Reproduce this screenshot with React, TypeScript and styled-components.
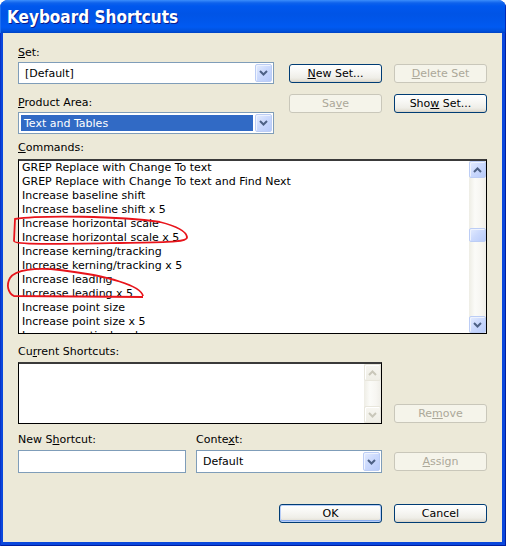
import React from "react";
import styled, { createGlobalStyle } from "styled-components";

const GlobalStyle = createGlobalStyle`
  html, body { margin: 0; padding: 0; background: #ffffff; }
  body {
    font-family: "DejaVu Sans", Verdana, sans-serif;
    font-size: 11px;
    color: #000;
  }
  * { box-sizing: border-box; }
`;

const Window = styled.div`
  width: 506px;
  height: 546px;
  display: flex;
  flex-direction: column;
  border-radius: 8px 8px 0 0;
  overflow: hidden;
  background: #0842d8;
`;

const TitleBar = styled.div`
  height: 33px;
  flex: none;
  display: flex;
  align-items: center;
  padding: 0 0 0 7px;
  background: linear-gradient(
    180deg,
    #3d8ffb 0px,
    #2b7ef6 1px,
    #0e62ec 3px,
    #0058ee 6px,
    #0054e6 14px,
    #0057ec 22px,
    #005af2 27px,
    #0050dc 31px,
    #0043c4 33px
  );
  box-shadow: inset 1px 0 0 #1f6ff0, inset -1px 0 0 #0029b8;
`;

const Title = styled.div`
  font-family: "DejaVu Sans Condensed", "DejaVu Sans", sans-serif;
  font-weight: bold;
  font-size: 17px;
  color: #ffffff;
  text-shadow: 1px 1px 0 #0a1a8a;
  padding-top: 1px;
`;

const Frame = styled.div`
  flex: 1;
  display: flex;
  padding: 0 4px 4px 3px;
  background: #0a47dc;
  box-shadow: inset 1px 0 0 #0a34c8, inset -1px 0 0 #001ea0,
    inset 0 -1px 0 #001ea0;
`;

const Body = styled.div`
  flex: 1;
  background: #ece9d8;
  padding: 13px 15px 0 15px;
  display: flex;
  flex-direction: column;
`;

const Row = styled.div<{ $mt?: number; $align?: string; $justify?: string; $gap?: number }>`
  display: flex;
  flex: none;
  align-items: ${(p) => p.$align ?? "flex-start"};
  justify-content: ${(p) => p.$justify ?? "flex-start"};
  gap: ${(p) => p.$gap ?? 0}px;
  margin-top: ${(p) => p.$mt ?? 0}px;
`;

const Field = styled.div<{ $w?: number; $mt?: number; $ml?: number }>`
  display: flex;
  flex-direction: column;
  flex: none;
  width: ${(p) => (p.$w ? `${p.$w}px` : "100%")};
  margin-top: ${(p) => p.$mt ?? 0}px;
  margin-left: ${(p) => p.$ml ?? 0}px;
`;

const Label = styled.div<{ $mb?: number; $mt?: number }>`
  height: 14px;
  line-height: 14px;
  white-space: nowrap;
  margin-top: ${(p) => p.$mt ?? 0}px;
  margin-bottom: ${(p) => p.$mb ?? 3}px;
`;

const Mn = styled.span`
  text-decoration: underline;
  text-underline-offset: 1px;
`;

const ButtonGrid = styled.div`
  display: grid;
  grid-template-columns: 93px 93px;
  grid-auto-rows: 19px;
  column-gap: 12px;
  row-gap: 11px;
  margin-left: 15px;
  padding-top: 18px;
`;

const XPButton = styled.div<{ $w?: number; $disabled?: boolean; $default?: boolean; $mb?: number; $ml?: number }>`
  width: ${(p) => p.$w ?? 93}px;
  height: 19px;
  flex: none;
  display: flex;
  align-items: center;
  justify-content: center;
  border-radius: 3px;
  margin-bottom: ${(p) => p.$mb ?? 0}px;
  margin-left: ${(p) => p.$ml ?? 0}px;
  white-space: nowrap;
  border: 1px solid ${(p) => (p.$disabled ? "#c9c7ba" : "#003c74")};
  color: ${(p) => (p.$disabled ? "#aca899" : "#000")};
  background: ${(p) =>
    p.$disabled
      ? "#f5f4ea"
      : "linear-gradient(180deg, #ffffff 0%, #f7f7f4 40%, #efeee8 75%, #e3e0d6 92%, #d6d0c5 100%)"};
  box-shadow: ${(p) =>
    p.$default ? "inset 0 0 0 1px #b7cdf7, inset 0 -1px 0 1px #89adef" : "none"};
`;

const TextBox = styled.div<{ $w?: number; $h?: number }>`
  width: ${(p) => (p.$w ? `${p.$w}px` : "100%")};
  height: ${(p) => p.$h ?? 22}px;
  border: 1px solid #7f9db9;
  background: #ffffff;
  display: flex;
  align-items: stretch;
  padding: 1px;
`;

const ComboText = styled.div<{ $selected?: boolean }>`
  flex: 1;
  display: flex;
  align-items: center;
  padding-left: ${(p) => (p.$selected ? 3 : 4)}px;
  margin: 1px 2px 1px 1px;
  background: ${(p) => (p.$selected ? "#316ac5" : "transparent")};
  color: ${(p) => (p.$selected ? "#ffffff" : "#000")};
  white-space: nowrap;
`;

const ArrowButton = styled.div<{ $disabled?: boolean }>`
  width: 17px;
  flex: none;
  display: flex;
  align-items: center;
  justify-content: center;
  border: 1px solid ${(p) => (p.$disabled ? "#e8e6dc" : "#bccdf5")};
  border-radius: 2px;
  background: ${(p) =>
    p.$disabled
      ? "linear-gradient(180deg, #f7f6f1 0%, #efeee6 100%)"
      : "linear-gradient(135deg, #e4ecfe 0%, #ccdafd 45%, #b8cbfa 100%)"};
  box-shadow: inset 1px 1px 0 ${(p) => (p.$disabled ? "#ffffff" : "#eef3fe")};
`;

const Chevron = ({ up, color }: { up?: boolean; color: string }) => (
  <svg width="9" height="6" viewBox="0 0 9 6" style={{ display: "block" }}>
    <path
      d={up ? "M1 5 L4.5 1.5 L8 5" : "M1 1 L4.5 4.5 L8 1"}
      fill="none"
      stroke={color}
      strokeWidth="2"
    />
  </svg>
);

const ListWrap = styled.div`
  position: relative;
`;

const ListBox = styled.div<{ $h: number; $w?: number }>`
  width: ${(p) => (p.$w ? `${p.$w}px` : "100%")};
  height: ${(p) => p.$h}px;
  flex: none;
  border: 1px solid #000;
  border-top-width: 2px;
  border-top-color: #3a3a3a;
  background: #ffffff;
  display: flex;
  overflow: hidden;
`;

const ListItems = styled.div`
  flex: 1;
  overflow: hidden;
  padding: 0 0 0 3px;
`;

const Item = styled.div`
  height: 14px;
  line-height: 14px;
  white-space: nowrap;
`;

const ScrollBar = styled.div`
  width: 17px;
  flex: none;
  display: flex;
  flex-direction: column;
  background: linear-gradient(90deg, #eeede5 0%, #fbfbf8 35%, #f7f6f2 70%, #efeee8 100%);
`;

const ScrollButton = styled(ArrowButton)`
  height: 17px;
  width: 17px;
`;

const Track = styled.div`
  flex: 1;
  display: flex;
  flex-direction: column;
`;

const Thumb = styled(ArrowButton)`
  height: 14px;
  width: 17px;
`;

const Annotation = styled.svg`
  position: absolute;
  left: 0;
  top: 0;
  overflow: visible;
  pointer-events: none;
`;

const commands = [
  "GREP Replace with Change To text",
  "GREP Replace with Change To text and Find Next",
  "Increase baseline shift",
  "Increase baseline shift x 5",
  "Increase horizontal scale",
  "Increase horizontal scale x 5",
  "Increase kerning/tracking",
  "Increase kerning/tracking x 5",
  "Increase leading",
  "Increase leading x 5",
  "Increase point size",
  "Increase point size x 5",
  "Increase vertical scale",
];

export default function App() {
  return (
    <>
      <GlobalStyle />
      <Window>
        <TitleBar>
          <Title>Keyboard Shortcuts</Title>
        </TitleBar>
        <Frame>
          <Body>
            <Row>
              <Field $w={256}>
                <Label $mb={2}>
                  <Mn>S</Mn>et:
                </Label>
                <TextBox>
                  <ComboText>[Default]</ComboText>
                  <ArrowButton>
                    <Chevron color="#4d6185" />
                  </ArrowButton>
                </TextBox>
                <Label $mb={2} $mt={12}>
                  <Mn>P</Mn>roduct Area:
                </Label>
                <TextBox>
                  <ComboText $selected>Text and Tables</ComboText>
                  <ArrowButton>
                    <Chevron color="#4d6185" />
                  </ArrowButton>
                </TextBox>
              </Field>
              <ButtonGrid>
                <XPButton>
                  <span>
                    <Mn>N</Mn>ew Set...
                  </span>
                </XPButton>
                <XPButton $disabled>
                  <span>
                    <Mn>D</Mn>elete Set
                  </span>
                </XPButton>
                <XPButton $disabled>
                  <span>
                    Sa<Mn>v</Mn>e
                  </span>
                </XPButton>
                <XPButton>
                  <span>
                    Sho<Mn>w</Mn> Set...
                  </span>
                </XPButton>
              </ButtonGrid>
            </Row>

            <Field $mt={7}>
              <Label $mb={4}>
                <Mn>C</Mn>ommands:
              </Label>
              <ListWrap>
                <ListBox $h={175}>
                  <ListItems>
                    {commands.map((c) => (
                      <Item key={c}>{c}</Item>
                    ))}
                  </ListItems>
                  <ScrollBar>
                    <ScrollButton>
                      <Chevron up color="#4d6185" />
                    </ScrollButton>
                    <Track>
                      <Thumb style={{ marginTop: 50 }} />
                    </Track>
                    <ScrollButton>
                      <Chevron color="#4d6185" />
                    </ScrollButton>
                  </ScrollBar>
                </ListBox>
                <Annotation width="469" height="175">
                  <path
                    d="M142 63 C102 57, 22 56, -3 60 L-4 82 C-4 86, 42 85, 102 84 C142 83, 170 84, 169 78 C168 72, 158 67, 142 63"
                    fill="none"
                    stroke="#e8141b"
                    strokeWidth="1.8"
                  />
                  <path
                    d="M125 137 C123 127, 92 117, 42 111 C17 108, -3 111, -8 119 C-12 126, -10 134, -4 137 L125 138"
                    fill="none"
                    stroke="#e8141b"
                    strokeWidth="1.8"
                  />
                </Annotation>
              </ListWrap>
            </Field>

            <Field $mt={11}>
              <Label>
                Cu<Mn>r</Mn>rent Shortcuts:
              </Label>
              <Row $align="flex-end" $gap={12}>
                <ListBox $h={62} $w={364}>
                  <ListItems />
                  <ScrollBar>
                    <ScrollButton $disabled>
                      <Chevron up color="#c9c7ba" />
                    </ScrollButton>
                    <Track />
                    <ScrollButton $disabled>
                      <Chevron color="#c9c7ba" />
                    </ScrollButton>
                  </ScrollBar>
                </ListBox>
                <XPButton $disabled $mb={1}>
                  <span>
                    Re<Mn>m</Mn>ove
                  </span>
                </XPButton>
              </Row>
            </Field>

            <Row $mt={9} $align="flex-end">
              <Field $w={168}>
                <Label>
                  New S<Mn>h</Mn>ortcut:
                </Label>
                <TextBox $h={23} />
              </Field>
              <Field $w={186} $ml={10}>
                <Label>
                  Conte<Mn>x</Mn>t:
                </Label>
                <TextBox $h={23}>
                  <ComboText>Default</ComboText>
                  <ArrowButton>
                    <Chevron color="#4d6185" />
                  </ArrowButton>
                </TextBox>
              </Field>
              <XPButton $disabled $mb={2} $ml={12}>
                <span>
                  <Mn>A</Mn>ssign
                </span>
              </XPButton>
            </Row>

            <Row $mt={31} $justify="flex-end" $gap={12}>
              <XPButton $w={103} $default>
                OK
              </XPButton>
              <XPButton>Cancel</XPButton>
            </Row>
          </Body>
        </Frame>
      </Window>
    </>
  );
}
